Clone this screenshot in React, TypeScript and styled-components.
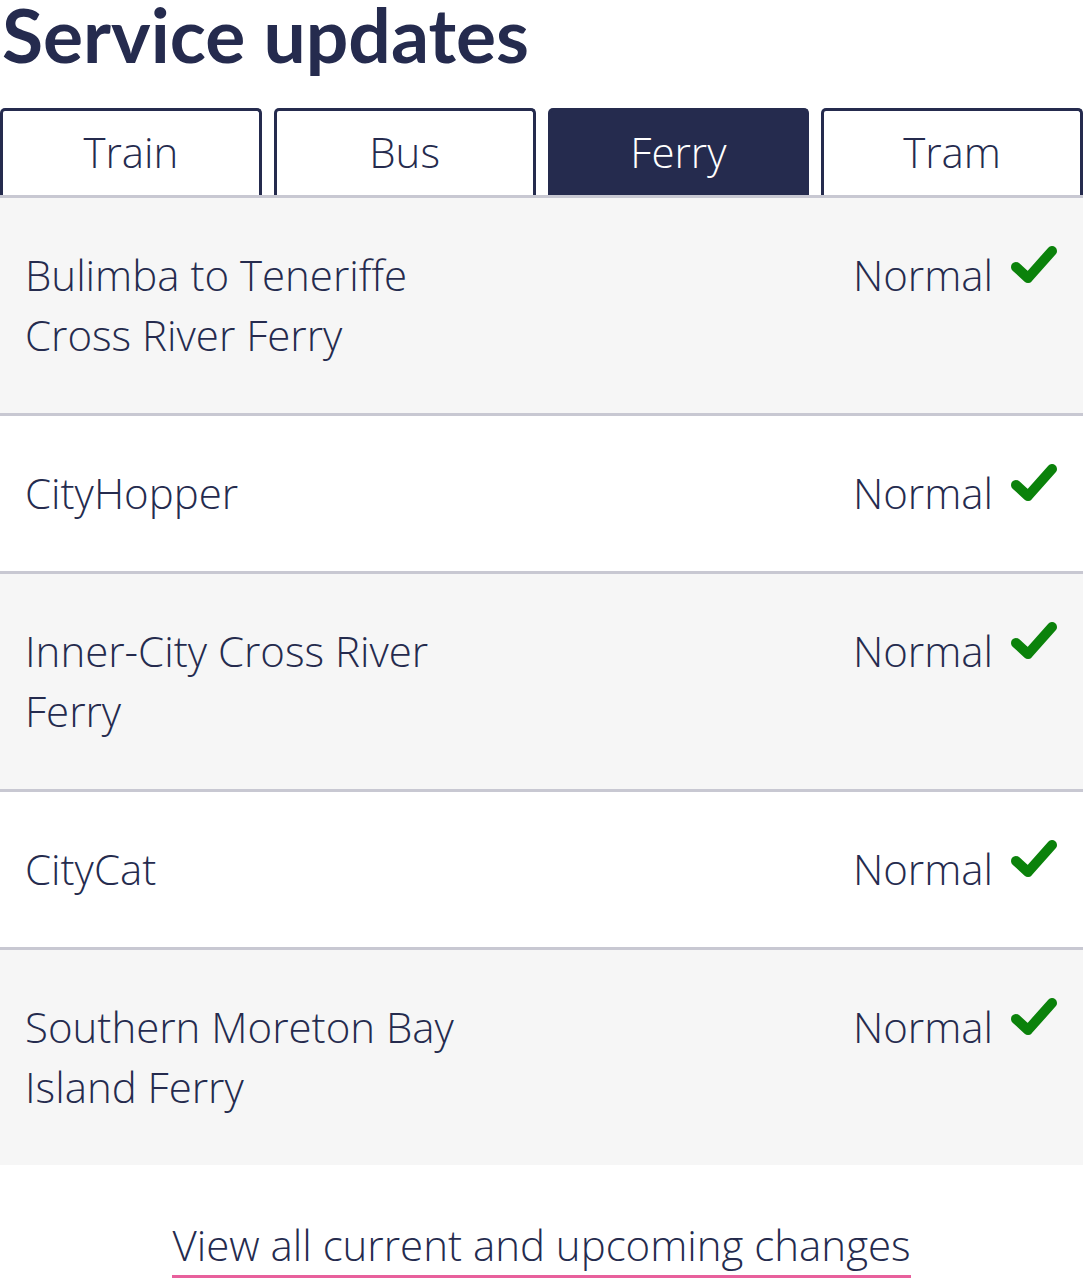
import React from "react";
import styled, { createGlobalStyle } from "styled-components";

const Global = createGlobalStyle`
  html, body { margin: 0; padding: 0; background: #ffffff; }
  body { font-family: "Open Sans", "Liberation Sans", sans-serif; color: #252b4e; }
  * { box-sizing: border-box; }
`;

const Page = styled.div`
  width: 1083px;
  display: flex;
  flex-direction: column;
`;

const Title = styled.h1`
  margin: 0 0 40px 0;
  padding-left: 2px;
  font-family: "Lato", "Open Sans", sans-serif;
  font-weight: 700;
  font-size: 75px;
  line-height: 68px;
  color: #252b4e;
`;

const Tabs = styled.div`
  display: grid;
  grid-template-columns: repeat(4, 1fr);
  gap: 12px;
`;

const Tab = styled.button<{ $active?: boolean }>`
  height: 87px;
  padding: 11px 0 13px;
  border: 3px solid #252b4e;
  border-bottom: none;
  border-radius: 5px 5px 0 0;
  background: ${(p) => (p.$active ? "#252b4e" : "#ffffff")};
  color: ${(p) => (p.$active ? "#ffffff" : "#252b4e")};
  font-family: "Open Sans", "Liberation Sans", sans-serif;
  font-weight: 300;
  font-size: 42px;
  line-height: 60px;
  text-align: center;
  cursor: pointer;
`;

const List = styled.div`
  display: flex;
  flex-direction: column;
`;

const Row = styled.div<{ $shaded?: boolean }>`
  display: flex;
  justify-content: space-between;
  align-items: flex-start;
  border-top: 3px solid #c8c8d2;
  background: ${(p) => (p.$shaded ? "#f6f6f6" : "#ffffff")};
  padding: 47px 26px 48px 25px;
`;

const Name = styled.div`
  font-weight: 300;
  font-size: 42px;
  line-height: 60px;
  max-width: 450px;
`;

const Status = styled.div`
  display: flex;
  align-items: flex-start;
  gap: 18px;
  font-weight: 300;
  font-size: 42px;
  line-height: 60px;
`;

const Check = styled.svg`
  width: 46px;
  height: 38px;
  margin-top: 1px;
  flex: none;
`;

const Footer = styled.div`
  display: flex;
  justify-content: center;
  padding-top: 50px;
`;

const Link = styled.a`
  font-weight: 300;
  font-size: 42px;
  line-height: 60px;
  color: #252b4e;
  text-decoration: none;
  border-bottom: 4px solid #e8609c;
`;

const routes = [
  "Bulimba to Teneriffe Cross River Ferry",
  "CityHopper",
  "Inner-City Cross River Ferry",
  "CityCat",
  "Southern Moreton Bay Island Ferry",
];

const tabs = ["Train", "Bus", "Ferry", "Tram"];

export default function App() {
  return (
    <Page>
      <Global />
      <Title>Service updates</Title>
      <Tabs>
        {tabs.map((t) => (
          <Tab key={t} $active={t === "Ferry"}>
            {t}
          </Tab>
        ))}
      </Tabs>
      <List>
        {routes.map((r, i) => (
          <Row key={r} $shaded={i % 2 === 0}>
            <Name>{r}</Name>
            <Status>
              Normal
              <Check viewBox="0 0 46 38">
                <polyline
                  points="5,21 17,32 41,5"
                  fill="none"
                  stroke="#0b820b"
                  strokeWidth="10"
                  strokeLinecap="round"
                  strokeLinejoin="round"
                />
              </Check>
            </Status>
          </Row>
        ))}
      </List>
      <Footer>
        <Link href="#">View all current and upcoming changes</Link>
      </Footer>
    </Page>
  );
}
